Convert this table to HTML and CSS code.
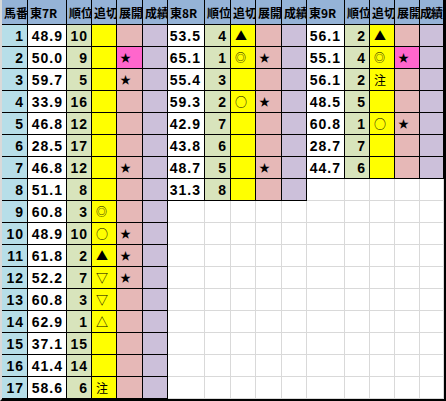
FILE: index.html
```html
<!DOCTYPE html>
<html lang="ja">
<head>
<meta charset="utf-8">
<title>東7R・東8R・東9R</title>
<link rel="stylesheet" href="styles.css">
</head>
<body>
<div class="sheet">
  <div class="c hd">馬番</div>
  <div class="c hd">東7R</div><div class="c hd">順位</div><div class="c hd">追切</div><div class="c hd">展開</div><div class="c hd">成績</div>
  <div class="c hd">東8R</div><div class="c hd">順位</div><div class="c hd">追切</div><div class="c hd">展開</div><div class="c hd">成績</div>
  <div class="c hd">東9R</div><div class="c hd">順位</div><div class="c hd">追切</div><div class="c hd">展開</div><div class="c hd last">成績</div>

  <div class="c no">1</div>
  <div class="c val">48.9</div><div class="c rk">10</div><div class="c cut"></div><div class="c dev"></div><div class="c res"></div>
  <div class="c val">53.5</div><div class="c rk">4</div><div class="c cut">▲</div><div class="c dev"></div><div class="c res"></div>
  <div class="c val">56.1</div><div class="c rk">2</div><div class="c cut">▲</div><div class="c dev"></div><div class="c res"></div>

  <div class="c no">2</div>
  <div class="c val">50.0</div><div class="c rk">9</div><div class="c cut"></div><div class="c dev hot">★</div><div class="c res"></div>
  <div class="c val">65.1</div><div class="c rk">1</div><div class="c cut dbl">◎</div><div class="c dev">★</div><div class="c res"></div>
  <div class="c val">55.1</div><div class="c rk">4</div><div class="c cut dbl">◎</div><div class="c dev hot">★</div><div class="c res"></div>

  <div class="c no">3</div>
  <div class="c val">59.7</div><div class="c rk">5</div><div class="c cut"></div><div class="c dev">★</div><div class="c res"></div>
  <div class="c val">55.4</div><div class="c rk">3</div><div class="c cut"></div><div class="c dev"></div><div class="c res"></div>
  <div class="c val">56.1</div><div class="c rk">2</div><div class="c cut">注</div><div class="c dev"></div><div class="c res"></div>

  <div class="c no">4</div>
  <div class="c val">33.9</div><div class="c rk">16</div><div class="c cut"></div><div class="c dev"></div><div class="c res"></div>
  <div class="c val">59.3</div><div class="c rk">2</div><div class="c cut">○</div><div class="c dev">★</div><div class="c res"></div>
  <div class="c val">48.5</div><div class="c rk">5</div><div class="c cut"></div><div class="c dev"></div><div class="c res"></div>

  <div class="c no">5</div>
  <div class="c val">46.8</div><div class="c rk">12</div><div class="c cut"></div><div class="c dev"></div><div class="c res"></div>
  <div class="c val">42.9</div><div class="c rk">7</div><div class="c cut"></div><div class="c dev"></div><div class="c res"></div>
  <div class="c val">60.8</div><div class="c rk">1</div><div class="c cut">○</div><div class="c dev">★</div><div class="c res"></div>

  <div class="c no">6</div>
  <div class="c val">28.5</div><div class="c rk">17</div><div class="c cut"></div><div class="c dev"></div><div class="c res"></div>
  <div class="c val">43.8</div><div class="c rk">6</div><div class="c cut"></div><div class="c dev"></div><div class="c res"></div>
  <div class="c val">28.7</div><div class="c rk">7</div><div class="c cut"></div><div class="c dev"></div><div class="c res"></div>

  <div class="c no">7</div>
  <div class="c val">46.8</div><div class="c rk">12</div><div class="c cut"></div><div class="c dev">★</div><div class="c res"></div>
  <div class="c val">48.7</div><div class="c rk">5</div><div class="c cut"></div><div class="c dev">★</div><div class="c res"></div>
  <div class="c val">44.7</div><div class="c rk">6</div><div class="c cut"></div><div class="c dev"></div><div class="c res"></div>

  <div class="c no">8</div>
  <div class="c val">51.1</div><div class="c rk">8</div><div class="c cut"></div><div class="c dev"></div><div class="c res"></div>
  <div class="c val">31.3</div><div class="c rk">8</div><div class="c cut"></div><div class="c dev"></div><div class="c res"></div>
  <div class="c e"></div><div class="c e"></div><div class="c e"></div><div class="c e"></div><div class="c e"></div>

  <div class="c no">9</div>
  <div class="c val">60.8</div><div class="c rk">3</div><div class="c cut dbl">◎</div><div class="c dev"></div><div class="c res"></div>
  <div class="c e"></div><div class="c e"></div><div class="c e"></div><div class="c e"></div><div class="c e"></div>
  <div class="c e"></div><div class="c e"></div><div class="c e"></div><div class="c e"></div><div class="c e"></div>

  <div class="c no">10</div>
  <div class="c val">48.9</div><div class="c rk">10</div><div class="c cut">○</div><div class="c dev">★</div><div class="c res"></div>
  <div class="c e"></div><div class="c e"></div><div class="c e"></div><div class="c e"></div><div class="c e"></div>
  <div class="c e"></div><div class="c e"></div><div class="c e"></div><div class="c e"></div><div class="c e"></div>

  <div class="c no">11</div>
  <div class="c val">61.8</div><div class="c rk">2</div><div class="c cut">▲</div><div class="c dev">★</div><div class="c res"></div>
  <div class="c e"></div><div class="c e"></div><div class="c e"></div><div class="c e"></div><div class="c e"></div>
  <div class="c e"></div><div class="c e"></div><div class="c e"></div><div class="c e"></div><div class="c e"></div>

  <div class="c no">12</div>
  <div class="c val">52.2</div><div class="c rk">7</div><div class="c cut">▽</div><div class="c dev">★</div><div class="c res"></div>
  <div class="c e"></div><div class="c e"></div><div class="c e"></div><div class="c e"></div><div class="c e"></div>
  <div class="c e"></div><div class="c e"></div><div class="c e"></div><div class="c e"></div><div class="c e"></div>

  <div class="c no">13</div>
  <div class="c val">60.8</div><div class="c rk">3</div><div class="c cut">▽</div><div class="c dev"></div><div class="c res"></div>
  <div class="c e"></div><div class="c e"></div><div class="c e"></div><div class="c e"></div><div class="c e"></div>
  <div class="c e"></div><div class="c e"></div><div class="c e"></div><div class="c e"></div><div class="c e"></div>

  <div class="c no">14</div>
  <div class="c val">62.9</div><div class="c rk">1</div><div class="c cut">△</div><div class="c dev"></div><div class="c res"></div>
  <div class="c e"></div><div class="c e"></div><div class="c e"></div><div class="c e"></div><div class="c e"></div>
  <div class="c e"></div><div class="c e"></div><div class="c e"></div><div class="c e"></div><div class="c e"></div>

  <div class="c no">15</div>
  <div class="c val">37.1</div><div class="c rk">15</div><div class="c cut"></div><div class="c dev"></div><div class="c res"></div>
  <div class="c e"></div><div class="c e"></div><div class="c e"></div><div class="c e"></div><div class="c e"></div>
  <div class="c e"></div><div class="c e"></div><div class="c e"></div><div class="c e"></div><div class="c e"></div>

  <div class="c no">16</div>
  <div class="c val">41.4</div><div class="c rk">14</div><div class="c cut"></div><div class="c dev"></div><div class="c res"></div>
  <div class="c e"></div><div class="c e"></div><div class="c e"></div><div class="c e"></div><div class="c e"></div>
  <div class="c e"></div><div class="c e"></div><div class="c e"></div><div class="c e"></div><div class="c e"></div>

  <div class="c no">17</div>
  <div class="c val">58.6</div><div class="c rk">6</div><div class="c cut">注</div><div class="c dev"></div><div class="c res"></div>
  <div class="c e"></div><div class="c e"></div><div class="c e"></div><div class="c e"></div><div class="c e"></div>
  <div class="c e"></div><div class="c e"></div><div class="c e"></div><div class="c e"></div><div class="c e"></div>
</div>
</body>
</html>
```

FILE: styles.css
```css
html, body {
  margin: 0;
  padding: 0;
  background: #ffffff;
  overflow: hidden;
}

.sheet {
  display: grid;
  grid-template-columns:
    26px
    39px 25px 25px 26px 25px
    37px 26px 25px 26px 25px
    38px 25px 25px 25px 24px;
  grid-template-rows: 25px repeat(17, 22px);
  width: 446px;
  height: 401px;
  box-sizing: border-box;
  border-left: 2px solid #d9d9d9;
  border-right: 2px solid #000000;
  border-bottom: 2px solid #000000;
  font-family: "Liberation Sans", Arial, sans-serif;
  font-weight: bold;
  font-size: 14px;
  color: #000000;
}

.c {
  box-sizing: border-box;
  border-right: 1px solid #000000;
  border-bottom: 1px solid #000000;
  display: flex;
  align-items: center;
  overflow: hidden;
  white-space: nowrap;
  line-height: 1;
}

.hd {
  background: #95b3d7;
  font-family: "Noto Sans CJK JP", sans-serif;
  font-size: 12px;
  padding-left: 2px;
  padding-top: 1px;
}

.hd.last {
  padding-left: 0;
  letter-spacing: -1px;
}

.no {
  background: #b7dee8;
  justify-content: flex-end;
  padding-right: 3px;
  letter-spacing: 1px;
}

.val {
  background: #ffffff;
  justify-content: flex-end;
  padding-right: 3px;
  letter-spacing: 1px;
}

.rk {
  background: #d8e4bc;
  justify-content: flex-end;
  padding-right: 3px;
  letter-spacing: 1px;
}

.cut {
  background: #ffff00;
  padding-left: 4px;
  font-family: "Noto Sans CJK JP", sans-serif;
  font-size: 12px;
  font-weight: normal;
}

.cut.dbl {
  font-size: 11px;
  padding-left: 4px;
}

.dev {
  background: #e6b8b7;
  padding-left: 3px;
  font-family: "Noto Sans CJK JP", sans-serif;
  font-size: 11px;
  font-weight: normal;
}

.dev.hot {
  background: #ff66cc;
}

.res {
  background: #ccc0da;
}

.e {
  background: #ffffff;
  border-right: 1px solid #d9d9d9;
  border-bottom: 1px solid #d9d9d9;
}
```
